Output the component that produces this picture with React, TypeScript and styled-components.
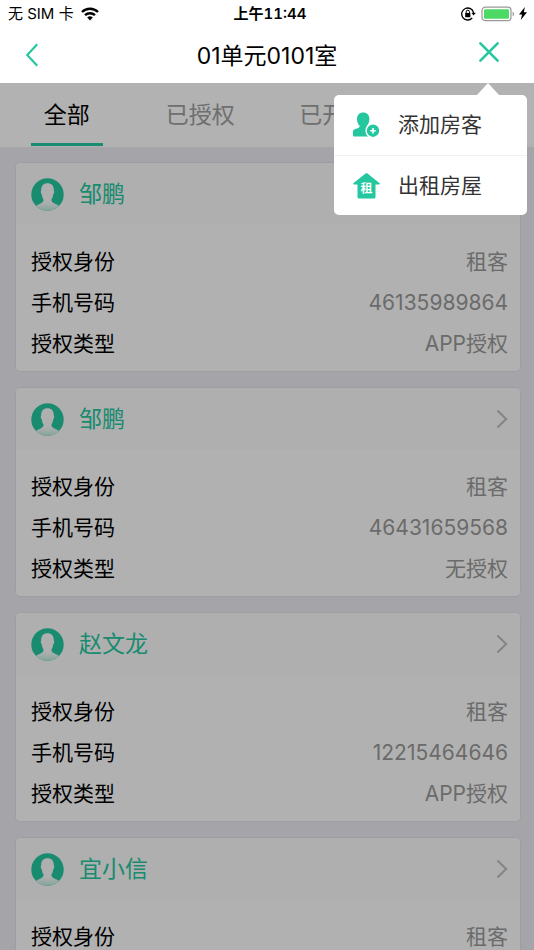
import React from 'react';
import styled, { createGlobalStyle } from 'styled-components';

const green = '#25c79f';

const GlobalStyle = createGlobalStyle`
  * { box-sizing: border-box; }
  body {
    margin: 0;
    background: #edecf3;
    font-family: Inter, "Noto Sans CJK SC", sans-serif;
    color: #000;
  }
  button { font: inherit; color: inherit; border: 0; padding: 0; background: none; cursor: pointer; }
  svg { display: block; flex: none; }
`;

const Screen = styled.div`
  display: flex;
  flex-direction: column;
  height: 100vh;
  overflow: hidden;
`;

const TopArea = styled.header`
  flex: none;
  background: #fff;
`;

const StatusBar = styled.div`
  display: grid;
  grid-template-columns: 1fr auto 1fr;
  align-items: center;
  height: 27px;
  padding: 0 7px 0 8px;
  font-size: 15px;
  line-height: 27px;
`;

const StatusGroup = styled.div<{ $end?: boolean }>`
  display: flex;
  align-items: center;
  justify-content: ${p => (p.$end ? 'flex-end' : 'flex-start')};
  gap: ${p => (p.$end ? '5px' : '7px')};
`;

const Clock = styled.time`
  padding-left: 5px;
  font-weight: 600;
  font-size: 15px;
  font-variant-numeric: tabular-nums;
`;

const NavBar = styled.nav`
  display: grid;
  grid-template-columns: 64px 1fr 64px;
  height: 56px;
  padding-right: 13px;
`;

const NavButton = styled.button<{ $height: number }>`
  display: flex;
  align-items: center;
  justify-content: center;
  height: ${p => p.$height}px;
`;

const Title = styled.h1`
  margin: 0;
  padding-left: 13px;
  font-size: 23px;
  line-height: 58px;
  font-weight: 400;
  text-align: center;
  white-space: nowrap;
`;

const Content = styled.main`
  position: relative;
  flex: 1;
  min-height: 0;
`;

const Scroller = styled.div`
  height: 100%;
  overflow: hidden;
`;

const Tabs = styled.div`
  display: grid;
  grid-template-columns: repeat(4, 1fr);
  height: 64px;
  background: #fff;
`;

const Tab = styled.button<{ $active?: boolean }>`
  justify-self: center;
  min-width: 72px;
  height: 63px;
  padding-top: 4px;
  border-bottom: 3px solid ${p => (p.$active ? green : 'transparent')};
  font-size: 23px;
  line-height: 56px;
  color: ${p => (p.$active ? '#000' : '#a0a0a0')};
`;

const CardList = styled.div`
  display: flex;
  flex-direction: column;
  gap: 17px;
  padding: 16px 14px 16px 16px;
`;

const Card = styled.article`
  flex: none;
  border-radius: 4px;
  background: #fefefe;
  box-shadow: 0 0 2px rgba(0, 0, 0, 0.15);
  overflow: hidden;
`;

const CardHeader = styled.button`
  display: flex;
  align-items: center;
  width: 100%;
  height: 62px;
  padding: 0 12px 0 15px;
  background: #fbfbfb;
`;

const Name = styled.span`
  flex: 1;
  padding-left: 15px;
  font-size: 23px;
  line-height: 32px;
  text-align: left;
  color: ${green};
`;

const Details = styled.dl`
  margin: 0;
  padding: 16px 12px 7px 15px;
`;

const Detail = styled.div`
  display: flex;
  justify-content: space-between;
  font-size: 21px;
  line-height: 41px;
`;

const Value = styled.dd`
  margin: 0;
  color: #9a9a9a;
`;

const Shade = styled.div`
  position: absolute;
  inset: 0;
  background: rgba(0, 0, 0, 0.3);
`;

const Menu = styled.div`
  position: absolute;
  top: 12px;
  right: 7px;
  width: 193px;
  border-radius: 5px;
  background: #fff;

  &::before {
    content: '';
    position: absolute;
    right: 28px;
    bottom: 100%;
    border: solid transparent;
    border-width: 0 11px 12px;
    border-bottom-color: #fff;
  }
`;

const MenuItem = styled.button`
  display: flex;
  align-items: center;
  gap: 18px;
  width: 100%;
  height: 60px;
  padding-left: 19px;
  font-size: 21px;
  line-height: 30px;
  color: #333;

  & + & {
    border-top: 1px solid #f0f0f0;
  }
`;

const IconLabel = styled.text`
  font: 700 12px "Noto Sans CJK SC", sans-serif;
  text-anchor: middle;
  fill: #fff;
`;

const WifiIcon = () => (
  <svg width="18" height="14" viewBox="0 0 18 14" fill="none" stroke="#000" strokeWidth="2.4">
    <path d="M1 5a11.4 11.4 0 0 1 16 0M4 8.2a7.2 7.2 0 0 1 10 0" />
    <path d="M6.2 10.6a4 4 0 0 1 5.6 0L9 13.4z" fill="#000" stroke="none" />
  </svg>
);

const RotationLockIcon = () => (
  <svg width="15" height="14" viewBox="0 0 15 14" fill="none" stroke="#000" strokeWidth="1.3">
    <path d="M12.6 5.800A6 6 0 1 0 11.200 11" />
    <path d="M10.4 5.8h4.4l-2.2 2.8z" fill="#000" stroke="none" />
    <path d="M5.2 6.4V4.8a1.6 1.6 0 0 1 3.2 0v1.6" strokeWidth="1" />
    <rect x="4.2" y="6" width="5.2" height="4.2" rx=".5" fill="#000" stroke="none" />
  </svg>
);

const BatteryIcon = () => (
  <svg width="33" height="16" viewBox="0 0 33 16">
    <rect x="1" y="1.2" width="29" height="13.4" rx="3.2" fill="#fff" stroke="#999" strokeWidth="1.2" />
    <rect x="3" y="3.2" width="25" height="9.6" rx="1.3" fill="#4cd964" />
    <path d="M31.6 5.4c1.8.7 1.8 4.3 0 5z" fill="#999" />
  </svg>
);

const BoltIcon = () => (
  <svg width="8" height="13" viewBox="0 0 8 13">
    <path d="M5.800 0 0 7.400h3L1.800 13 8 5.200H4.900z" fill="#000" />
  </svg>
);

const BackIcon = () => (
  <svg width="12" height="24" viewBox="0 0 12 24" fill="none" stroke={green} strokeWidth="2.2">
    <path d="M11.2 1.2 1.2 12l10 10.8" />
  </svg>
);

const CloseIcon = () => (
  <svg width="20" height="20" viewBox="0 0 20 20" fill="none" stroke={green} strokeWidth="2.6" strokeLinecap="round">
    <path d="m1.4 1.4 17.2 17.2M18.6 1.4 1.4 18.6" />
  </svg>
);

const ChevronIcon = () => (
  <svg width="12" height="20" viewBox="0 0 12 20" fill="none" stroke="#bebec3" strokeWidth="2">
    <path d="m1.4 1.5 8.8 8.5-8.8 8.5" />
  </svg>
);

const Avatar = () => (
  <svg width="33" height="33" viewBox="0 0 33 33">
    <defs>
      <linearGradient id="torso" gradientUnits="userSpaceOnUse" x1="0" y1="24" x2="0" y2="33">
        <stop offset="0" stopColor="#fbfbfb" />
        <stop offset="1" stopColor="#bdebdf" />
      </linearGradient>
      <clipPath id="disc"><circle cx="16.5" cy="16.5" r="16.2" /></clipPath>
    </defs>
    <g clipPath="url(#disc)">
      <rect width="33" height="33" fill={green} />
      <path d="M16.500 5.200c4.200 0 6.500 2.800 6.300 7.200.8.7.5 3-.6 4.200-.3 2.300-.8 3.700-1.700 4.800-.3 2.200.8 3 3 4 2 .9 3.500 1.600 5.500 3.200V34H4v-5.400c2-1.600 3.500-2.300 5.500-3.200 2.200-1 3.300-1.800 3-4-.9-1.100-1.400-2.500-1.700-4.800-1.100-1.200-1.400-3.500-.6-4.200-.2-4.400 2.100-7.200 6.300-7.200z" fill="url(#torso)" />
    </g>
  </svg>
);

const AddTenantIcon = () => (
  <svg width="27" height="26" viewBox="0 0 27 26">
    <path d="M10.200.4c3.800 0 6.200 2.600 6.200 6.500 0 3.200-1.100 5.500-2.700 6.900-.2 1.500.4 2.400 2 3L17 24.500H1.500C.6 24.500 0 24 0 23v-3c0-1.700.7-2.400 2.300-2.900 2.700-.8 4.600-1.400 4.400-3.300C5.100 12.400 4 10.100 4 6.900 4 3 6.400.4 10.200.4z" fill={green} />
    <circle cx="20" cy="18.700" r="6.900" fill={green} stroke="#fff" strokeWidth="1.400" />
    <path d="M20 16v5.400M17.300 18.700h5.400" stroke="#fff" strokeWidth="1.600" />
  </svg>
);

const RentHouseIcon = () => (
  <svg width="27" height="26" viewBox="0 0 27 26">
    <path d="M12.200.7c.8-.6 1.800-.6 2.600 0L26.400 10c.8.7.5 1.500-.5 1.500h-3.400V24c0 .9-.6 1.500-1.500 1.500H6c-.9 0-1.500-.6-1.500-1.500V11.500H1.100c-1 0-1.300-.8-.5-1.500z" fill={green} />
    <IconLabel x="13.500" y="20">租</IconLabel>
  </svg>
);

const tenants = [
  { name: '邹鹏', phone: '46135989864', type: 'APP授权' },
  { name: '邹鹏', phone: '46431659568', type: '无授权' },
  { name: '赵文龙', phone: '12215464646', type: 'APP授权' },
  { name: '宜小信', phone: '13512345678', type: 'APP授权' },
];

const tabs = ['全部', '已授权', '已开通', '未授权'];

export default function App() {
  return (
    <Screen>
      <GlobalStyle />
      <TopArea>
        <StatusBar>
          <StatusGroup>无 SIM 卡<WifiIcon /></StatusGroup>
          <Clock>上午11:44</Clock>
          <StatusGroup $end><RotationLockIcon /><BatteryIcon /><BoltIcon /></StatusGroup>
        </StatusBar>
        <NavBar>
          <NavButton $height={56} aria-label="返回"><BackIcon /></NavButton>
          <Title>01单元0101室</Title>
          <NavButton $height={50} aria-label="关闭菜单"><CloseIcon /></NavButton>
        </NavBar>
      </TopArea>
      <Content>
        <Scroller>
          <Tabs role="tablist">
            {tabs.map((label, i) => (
              <Tab key={label} role="tab" aria-selected={i === 0} $active={i === 0}>{label}</Tab>
            ))}
          </Tabs>
          <CardList>
            {tenants.map(t => (
              <Card key={t.phone}>
                <CardHeader>
                  <Avatar />
                  <Name>{t.name}</Name>
                  <ChevronIcon />
                </CardHeader>
                <Details>
                  <Detail><dt>授权身份</dt><Value>租客</Value></Detail>
                  <Detail><dt>手机号码</dt><Value>{t.phone}</Value></Detail>
                  <Detail><dt>授权类型</dt><Value>{t.type}</Value></Detail>
                </Details>
              </Card>
            ))}
          </CardList>
        </Scroller>
        <Shade />
        <Menu role="menu">
          <MenuItem role="menuitem"><AddTenantIcon />添加房客</MenuItem>
          <MenuItem role="menuitem"><RentHouseIcon />出租房屋</MenuItem>
        </Menu>
      </Content>
    </Screen>
  );
}
